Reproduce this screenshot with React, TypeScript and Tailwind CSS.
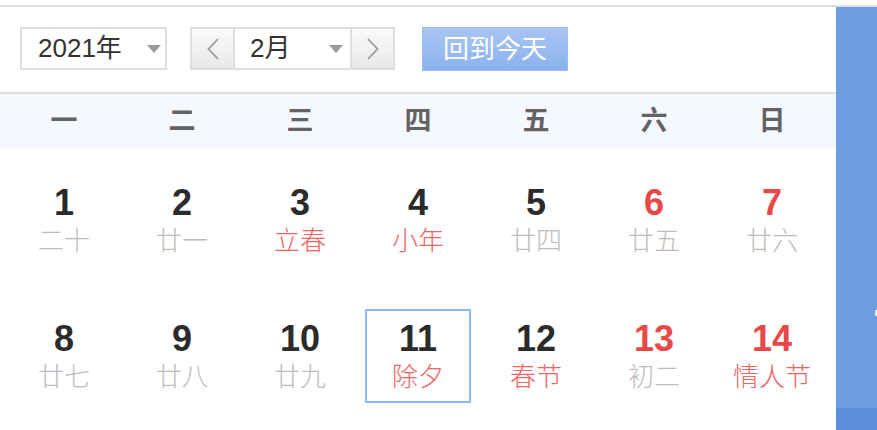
import React from 'react';

type Day = {
  num: number;
  lunar: string;
  weekend?: boolean;
  festival?: boolean;
  selected?: boolean;
};

const weekdays = ['一', '二', '三', '四', '五', '六', '日'];

const rows: Day[][] = [
  [
    { num: 1, lunar: '二十' },
    { num: 2, lunar: '廿一' },
    { num: 3, lunar: '立春', festival: true },
    { num: 4, lunar: '小年', festival: true },
    { num: 5, lunar: '廿四' },
    { num: 6, lunar: '廿五', weekend: true },
    { num: 7, lunar: '廿六', weekend: true },
  ],
  [
    { num: 8, lunar: '廿七' },
    { num: 9, lunar: '廿八' },
    { num: 10, lunar: '廿九' },
    { num: 11, lunar: '除夕', festival: true, selected: true },
    { num: 12, lunar: '春节', festival: true },
    { num: 13, lunar: '初二', weekend: true },
    { num: 14, lunar: '情人节', weekend: true, festival: true },
  ],
];

const Caret = () => (
  <svg width="14" height="8" viewBox="0 0 14 8" className="shrink-0">
    <path d="M0 0 L14 0 L7 8 Z" fill="#9a9a9a" />
  </svg>
);

const Chevron = ({ dir }: { dir: 'left' | 'right' }) => (
  <svg width="12" height="22" viewBox="0 0 12 22">
    <path
      d={dir === 'left' ? 'M11 1 L1.5 11 L11 21' : 'M1 1 L10.5 11 L1 21'}
      fill="none"
      stroke="#999"
      strokeWidth="1.8"
    />
  </svg>
);

const DayCell = ({ day }: { day: Day }) => {
  const numColor = day.weekend ? 'text-[#e84848]' : 'text-[#2b2b2b]';
  const lunarColor = day.festival ? 'text-[#f06464]' : 'text-[#bdbdbd]';
  return (
    <div className="flex justify-center">
      <div
        className={`w-[106px] h-[94px] border-2 flex flex-col items-center justify-center pb-[2px] ${
          day.selected ? 'border-[#8cbaf6]' : 'border-transparent'
        }`}
      >
        <span className={`text-[36px] leading-[40px] font-bold ${numColor}`}>{day.num}</span>
        <span className={`text-[26px] leading-[28px] font-light mt-[4px] ${lunarColor}`}>{day.lunar}</span>
      </div>
    </div>
  );
};

export default function App() {
  return (
    <div
      className="w-[877px] h-[430px] overflow-hidden bg-white"
      style={{ fontFamily: '"Liberation Sans", "Noto Sans CJK SC", sans-serif' }}
    >
      <div className="h-[5px]" />
      <div className="flex border-t-2 border-[#dedede] h-[425px]">
        {/* Calendar */}
        <div className="w-[836px] shrink-0 flex flex-col">
          {/* Toolbar */}
          <div className="h-[87px] flex items-start pt-[20px] pl-[20px] border-b-2 border-[#dedede]">
            <div className="w-[147px] h-[43px] border-2 border-[#dedede] flex items-center justify-between pl-[16px] pr-[4px]">
              <span className="text-[26px] text-[#333]">2021年</span>
              <Caret />
            </div>

            <div className="ml-[23px] flex h-[43px] border-2 border-[#dedede]">
              <div className="w-[43px] flex items-center justify-center bg-gradient-to-b from-[#fafafa] to-[#e9e9e9] border-r-2 border-[#dedede]">
                <Chevron dir="left" />
              </div>
              <div className="w-[115px] flex items-center justify-between pl-[15px] pr-[7px]">
                <span className="text-[26px] text-[#333]">2月</span>
                <Caret />
              </div>
              <div className="w-[43px] flex items-center justify-center bg-gradient-to-b from-[#fafafa] to-[#e9e9e9] border-l-2 border-[#dedede]">
                <Chevron dir="right" />
              </div>
            </div>

            <button className="ml-[27px] w-[146px] h-[44px] flex items-center justify-center bg-gradient-to-b from-[#a9c6f2] to-[#8ab1ee] border border-[#9dbdf0] text-white text-[26px]">
              回到今天
            </button>
          </div>

          {/* Weekday header */}
          <div className="h-[54px] bg-[#f5f8fe] grid grid-cols-7 px-[5px] items-center">
            {weekdays.map((w) => (
              <div key={w} className="text-center text-[27px] font-bold text-[#636363]">
                {w}
              </div>
            ))}
          </div>

          {/* Days */}
          <div className="flex flex-col gap-[42px] pt-[25px] px-[5px]">
            {rows.map((row, i) => (
              <div key={i} className="grid grid-cols-7">
                {row.map((d) => (
                  <DayCell key={d.num} day={d} />
                ))}
              </div>
            ))}
          </div>
        </div>

        {/* Side panel */}
        <div className="flex-1 bg-[#6c9de0] flex flex-col relative">
          <div className="flex-1" />
          <div className="h-[22px] bg-[#5b8edc]" />
          <span className="absolute right-0 top-[303px] w-[2px] h-[6px] bg-white/80" />
        </div>
      </div>
    </div>
  );
}
